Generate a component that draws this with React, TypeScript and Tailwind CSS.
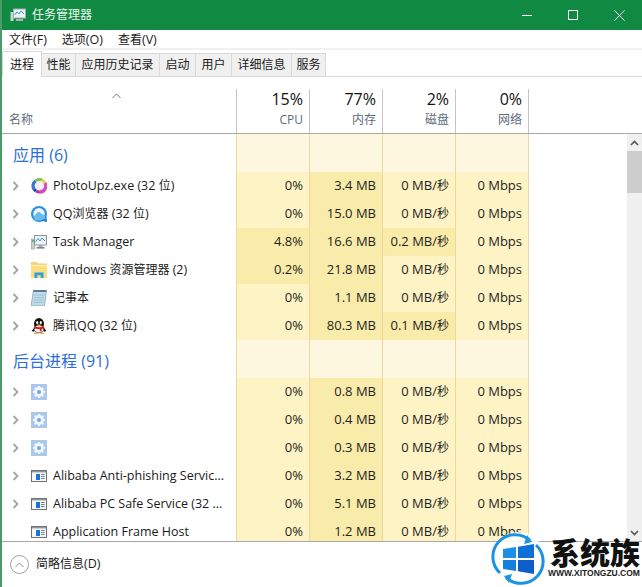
import React from 'react';

const FONT = '"Open Sans", "Noto Sans CJK SC", sans-serif';

const LIGHT = 'bg-[#fdf3c5]';
const DARK = 'bg-[#f9eba9]';

type Proc = { icon?: React.ReactNode; name: string; cpu: string; mem: string; disk: string; net: string; hot?: string; noArrow?: boolean };

// Chinese runs are a size smaller than the latin text around them
function Mixed({ text }: { text: string }) {
  return (
    <>
      {text.split(/([\u4e00-\u9fff]+)/).map((part, i) =>
        i % 2 === 1 ? <span key={i} className="text-[12px]">{part}</span> : <span key={i}>{part}</span>
      )}
    </>
  );
}

const Chevron = () => (
  <svg width="8" height="10" viewBox="0 0 8 10" fill="none" stroke="#a3a3a3" strokeWidth="1.8"><path d="M1.5 1l4 4-4 4" /></svg>
);

const PhotoIcon = () => (
  <svg width="16" height="16" viewBox="0 0 16 16">
    <circle cx="8.500" cy="8" r="5.800" fill="#f6f0f6" />
    <path d="M4.500 3A6 6 0 0 1 11 2" fill="none" stroke="#8cc152" strokeWidth="3" />
    <path d="M11 2a6 6 0 0 1 3 3" fill="none" stroke="#dcd64a" strokeWidth="3" />
    <path d="M14 5a6 6 0 0 1-5 9" fill="none" stroke="#cf4fbe" strokeWidth="3.400" />
    <path d="M9 14a6 6 0 0 1-4-1" fill="none" stroke="#b03fa8" strokeWidth="3" />
    <path d="M4.500 3A6 6 0 0 0 3 11" fill="none" stroke="#2f7ad0" strokeWidth="3.400" />
    <path d="M3 11a6 6 0 0 0 2 2" fill="none" stroke="#274a9e" strokeWidth="3" />
  </svg>
);

const QQBrowserIcon = () => (
  <svg width="16" height="16" viewBox="0 0 16 16">
    <circle cx="8" cy="8" r="8" fill="#2a8fdc" />
    <circle cx="8" cy="7.800" r="5.800" fill="#e9f5fd" />
    <path d="M2.400 10.500c2-.8 2.800-4.500 5.600-4.500 2 0 2.200 2.400 3.600 2.600 1 .1 1.800-.2 2.400-.6v4.500L9 14.500H4z" fill="#6bbcee" />
    <path d="M10.500 14.800c2-.4 4-1.800 5-4.300l.5 5.500z" fill="#1e7cc9" />
  </svg>
);

const TaskIcon = () => (
  <svg width="16" height="16" viewBox="0 0 16 16">
    <rect x="0.500" y="5" width="3" height="10" fill="#c9cfc9" stroke="#8c9a8c" strokeWidth="0.600" />
    <rect x="1.200" y="6" width="1.600" height="2" fill="#46b04a" />
    <rect x="3.500" y="1.500" width="12" height="9.500" fill="#eef4f8" stroke="#8f989e" />
    <path d="M4.500 8l2.500-3.500 2 2.500 2-3 3 3" fill="none" stroke="#3f97d6" strokeWidth="1" />
    <rect x="7.500" y="11" width="4" height="2" fill="#a5abb0" />
    <rect x="5.500" y="13" width="8" height="1.600" fill="#7f868b" />
  </svg>
);

const FolderIcon = () => (
  <svg width="16" height="16" viewBox="0 0 16 16">
    <path d="M0 0h6l1.500 1.500H16v2H0z" fill="#f5d36e" />
    <rect x="0" y="3" width="16" height="13" fill="#fbdd82" />
    <path d="M0 3.500h16" stroke="#fff2c4" strokeWidth="1" />
    <path d="M3.500 16v-5.500h9V16h-2.800v-2.800H6.300V16z" fill="#2aa0e0" />
  </svg>
);

const NotepadIcon = () => (
  <svg width="16" height="16" viewBox="0 0 16 16">
    <path d="M2.500 0h13l-2 16H0z" fill="#bfdcec" stroke="#7f9aa8" strokeWidth="0.700" />
    <path d="M2.500 0h13l-.3 2H2.300z" fill="#5f7a88" />
    <path d="M3.200 5h10M2.900 7.500h10M2.500 10h10M2.100 12.500h10" stroke="#8fb7cc" strokeWidth="0.700" />
  </svg>
);

const PenguinIcon = () => (
  <svg width="16" height="16" viewBox="0 0 16 16">
    <ellipse cx="8" cy="5.800" rx="5" ry="5.800" fill="#111" />
    <ellipse cx="8" cy="11" rx="5" ry="3.800" fill="#f4f4f4" stroke="#111" strokeWidth="0.600" />
    <ellipse cx="6.200" cy="4.400" rx="1.100" ry="1.500" fill="#fff" />
    <ellipse cx="9.800" cy="4.400" rx="1.100" ry="1.500" fill="#fff" />
    <path d="M5.400 6.600h5.200L8 8.400z" fill="#f4b120" />
    <path d="M3 8.200c3.200 1.500 6.800 1.500 10 0l.3 2c-.9.500-1.800.7-2.700.9l.2 2.200H9L8.600 11H6.600c-1.300-.1-2.600-.4-3.700-1z" fill="#e0141a" />
    <path d="M3.500 9.500L.5 13l2.700.7zM12.500 9.500l3 3.500-2.700.7z" fill="#111" />
    <path d="M2.500 16c1-1.800 3.600-1.800 4.500 0zM9 16c1-1.800 3.600-1.800 4.500 0z" fill="#f4a51c" />
  </svg>
);

const GearIcon = () => (
  <svg width="16" height="16" viewBox="0 0 16 16">
    <rect width="16" height="16" fill="#a9c8ec" />
    <circle cx="8" cy="8" r="3.600" fill="none" stroke="#f2f7fd" strokeWidth="2.600" />
    <path d="M8 2v2.400M8 11.600V14M2 8h2.400M11.600 8H14M3.800 3.800l1.700 1.700M10.500 10.500l1.700 1.700M12.200 3.800l-1.700 1.700M5.500 10.500l-1.700 1.700" stroke="#f2f7fd" strokeWidth="2" />
    <circle cx="8" cy="8" r="1.600" fill="#6fa3dc" />
  </svg>
);

const ServiceIcon = () => (
  <svg width="16" height="16" viewBox="0 0 16 16">
    <rect x="0.500" y="2.500" width="15" height="11" fill="#f7f7f7" stroke="#6d7378" />
    <path d="M1 3h14v1.400H1z" fill="#8f959a" />
    <rect x="5" y="6" width="4" height="6" fill="#1a73d9" />
    <path d="M10 6.500h3.600M10 8.500h3.600M10 10.500h3.600" stroke="#6d7378" strokeWidth="0.900" />
  </svg>
);

const apps: Proc[] = [
  { icon: <PhotoIcon />, name: 'PhotoUpz.exe (32 位)', cpu: '0%', mem: '3.4 MB', disk: '0 MB/秒', net: '0 Mbps' },
  { icon: <QQBrowserIcon />, name: 'QQ浏览器 (32 位)', cpu: '0%', mem: '15.0 MB', disk: '0 MB/秒', net: '0 Mbps' },
  { icon: <TaskIcon />, name: 'Task Manager', cpu: '4.8%', mem: '16.6 MB', disk: '0.2 MB/秒', net: '0 Mbps', hot: 'cd' },
  { icon: <FolderIcon />, name: 'Windows 资源管理器 (2)', cpu: '0.2%', mem: '21.8 MB', disk: '0 MB/秒', net: '0 Mbps', hot: 'c' },
  { icon: <NotepadIcon />, name: '记事本', cpu: '0%', mem: '1.1 MB', disk: '0 MB/秒', net: '0 Mbps' },
  { icon: <PenguinIcon />, name: '腾讯QQ (32 位)', cpu: '0%', mem: '80.3 MB', disk: '0.1 MB/秒', net: '0 Mbps', hot: 'd' },
];

const background: Proc[] = [
  { icon: <GearIcon />, name: '', cpu: '0%', mem: '0.8 MB', disk: '0 MB/秒', net: '0 Mbps' },
  { icon: <GearIcon />, name: '', cpu: '0%', mem: '0.4 MB', disk: '0 MB/秒', net: '0 Mbps' },
  { icon: <GearIcon />, name: '', cpu: '0%', mem: '0.3 MB', disk: '0 MB/秒', net: '0 Mbps' },
  { icon: <ServiceIcon />, name: 'Alibaba Anti-phishing Servic...', cpu: '0%', mem: '3.2 MB', disk: '0 MB/秒', net: '0 Mbps' },
  { icon: <ServiceIcon />, name: 'Alibaba PC Safe Service (32 ...', cpu: '0%', mem: '5.1 MB', disk: '0 MB/秒', net: '0 Mbps' },
  { icon: <ServiceIcon />, name: 'Application Frame Host', cpu: '0%', mem: '1.2 MB', disk: '0 MB/秒', net: '0 Mbps', noArrow: true },
];

function Cell({ children, tone }: { children?: React.ReactNode; tone: string }) {
  return (
    <div className={`w-[73px] h-full shrink-0 border-r border-[#ecd9a0] pr-[6px] flex items-center justify-end text-[13px] text-[#1f1f1f] whitespace-pre ${tone}`}>
      {children}
    </div>
  );
}

function Row({ p }: { p: Proc }) {
  return (
    <div className="flex h-7">
      <div className="w-[234px] shrink-0 flex items-center text-[12.500px] text-[#1a1a1a] whitespace-pre">
        <div className="w-[29px] pl-[10px] flex items-center">{!p.noArrow && <Chevron />}</div>
        <div className="w-[22px] flex items-center">{p.icon}</div>
        <span><Mixed text={p.name} /></span>
      </div>
      <div className="w-px shrink-0 bg-[#ecd9a0]" />
      <Cell tone={p.hot?.includes('c') ? DARK : LIGHT}>{p.cpu}</Cell>
      <Cell tone={DARK}>{p.mem}</Cell>
      <Cell tone={p.hot?.includes('d') ? DARK : LIGHT}><Mixed text={p.disk} /></Cell>
      <Cell tone={LIGHT}>{p.net}</Cell>
    </div>
  );
}

function Group({ title }: { title: string }) {
  const tone = 'bg-[#fef7e0]';
  return (
    <div className="flex h-[38px]">
      <div className="w-[234px] shrink-0 pl-[11px] pt-[10px] text-[16px] leading-[22px] text-[#2c6fd6]">{title}</div>
      <div className="w-px shrink-0 bg-[#ecd9a0]" />
      <Cell tone={tone} />
      <Cell tone={tone} />
      <Cell tone={tone} />
      <Cell tone={tone} />
    </div>
  );
}

function HeadCol({ pct, label }: { pct: string; label: string }) {
  return (
    <div className="w-[73px] h-[44px] shrink-0 border-r border-[#c4c4c4] pr-[6px] flex flex-col items-end">
      <div className="text-[16px] leading-[20px] text-[#111]">{pct}</div>
      <div className="text-[12px] leading-[16px] mt-[3px] text-[#5f6b7c]">{label}</div>
    </div>
  );
}

const tabs = [
  { label: '性能', w: 'w-[34px]' },
  { label: '应用历史记录', w: 'w-[84px]' },
  { label: '启动', w: 'w-[36px]' },
  { label: '用户', w: 'w-[36px]' },
  { label: '详细信息', w: 'w-[60px]' },
  { label: '服务', w: 'w-[34px]' },
];

function Watermark() {
  return (
    <div className="absolute left-[491px] top-[532px] w-[151px] h-[55px]">
      <svg width="54" height="54" viewBox="0 0 54 54" className="absolute left-0 top-0">
        <circle cx="27" cy="27" r="27" fill="#ffffff" opacity="0.850" />
        <path d="M9 41A22 22 0 0 1 39 8.500" fill="none" stroke="#1c93e2" strokeWidth="3" />
        <path d="M45 13A22 22 0 0 1 15 45.500" fill="none" stroke="#1c93e2" strokeWidth="3" />
        <path d="M36 3l5 7-8 2z" fill="#1c93e2" />
        <path d="M18 51l-5-7 8-2z" fill="#1c93e2" />
        <path d="M12 17l13-2v11H12z" fill="#1d8fe6" />
        <path d="M27 14.700l16-2.700v14H27z" fill="#0f6fd8" />
        <path d="M12 28h13v11l-13-2z" fill="#1380de" />
        <path d="M27 28h16v14l-16-2.700z" fill="#0a5fc8" />
      </svg>
      <div className="absolute left-[59px] top-[3px] text-[30px] leading-[32px] font-black text-[#111] whitespace-nowrap [font-family:'Noto_Sans_CJK_SC',sans-serif]">系统族</div>
      <div className="absolute left-[57px] top-[35px] text-[8.500px] leading-[12px] font-bold text-[#222] whitespace-nowrap [font-family:'Liberation_Sans',sans-serif]">WWW.XITONGZU.COM</div>
    </div>
  );
}

export default function App() {
  return (
    <div className="relative w-[642px] h-[587px] overflow-hidden bg-white flex" style={{ fontFamily: FONT }}>
      <div className="w-[2px] shrink-0 bg-[#4a9a6a]" />
      <div className="flex-1 min-w-0 flex flex-col">
        {/* title bar */}
        <div className="h-[30px] shrink-0 bg-[#108a42] flex items-center text-white">
          <div className="pl-[8px] w-[30px]">
            <svg width="16" height="16" viewBox="0 0 16 16">
              <rect x="0.500" y="5" width="3" height="9" fill="#c5d5cb" />
              <rect x="3.500" y="2" width="12" height="9" fill="#e8f2f6" stroke="#9fb0b0" />
              <path d="M4.500 8l2.500-3 2 2 2-3 3 3" fill="none" stroke="#3f97d6" strokeWidth="1" />
              <rect x="6" y="12" width="7" height="2" fill="#a8b8b0" />
            </svg>
          </div>
          <span className="text-[12px] text-[#eaf5ee]">任务管理器</span>
          <div className="ml-auto flex items-center">
            <div className="w-[46px] flex justify-center"><div className="w-[10px] h-px bg-white" /></div>
            <div className="w-[46px] flex justify-center"><div className="w-[10px] h-[10px] border border-white" /></div>
            <div className="w-[46px] flex justify-center">
              <svg width="11" height="11" viewBox="0 0 11 11" stroke="#fff" strokeWidth="1"><path d="M0.500 0.500l10 10M10.500 0.500l-10 10" /></svg>
            </div>
          </div>
        </div>
        {/* menu */}
        <div className="h-[18px] shrink-0 flex items-center text-[12.500px] text-[#1a1a1a] pl-[7px] gap-[15px] pt-[2px]">
          <span><Mixed text="文件(F)" /></span><span><Mixed text="选项(O)" /></span><span><Mixed text="查看(V)" /></span>
        </div>
        <div className="h-[2px] shrink-0 bg-[#f1f1f1]" />
        {/* tabs */}
        <div className="h-[27px] shrink-0 flex items-end border-b border-[#d9d9d9] text-[12px] text-[#1a1a1a]">
          <div className="h-[26px] w-[40px] border border-[#d9d9d9] border-b-0 bg-white flex items-center justify-center relative top-px">进程</div>
          {tabs.map((t) => (
            <div key={t.label} className={`h-[23px] ${t.w} bg-[#f0f0f0] border-r border-t border-[#d9d9d9] flex items-center justify-center`}>{t.label}</div>
          ))}
        </div>
        {/* column heads */}
        <div className="h-[57px] shrink-0 flex items-end border-b border-[#a8a8a8]">
          <div className="w-[234px] h-[44px] shrink-0 relative">
            <svg width="9" height="6" viewBox="0 0 9 6" fill="none" stroke="#777" className="absolute left-[110px] top-[4px]"><path d="M0.500 5l4-4 4 4" /></svg>
            <span className="absolute left-[7px] top-[23px] text-[12px] leading-[16px] text-[#5f6b7c]">名称</span>
          </div>
          <div className="w-px h-[44px] shrink-0 bg-[#c4c4c4]" />
          <HeadCol pct="15%" label="CPU" />
          <HeadCol pct="77%" label="内存" />
          <HeadCol pct="2%" label="磁盘" />
          <HeadCol pct="0%" label="网络" />
        </div>
        {/* table body */}
        <div className="h-[407px] shrink-0 flex overflow-hidden">
          <div className="w-[625px] shrink-0">
            <Group title="应用 (6)" />
            {apps.map((p) => <Row key={p.name} p={p} />)}
            <Group title="后台进程 (91)" />
            {background.map((p, i) => <Row key={i} p={p} />)}
          </div>
          <div className="w-[15px] shrink-0 bg-[#f0f0f0] flex flex-col">
            <div className="h-[17px] flex items-center justify-center">
              <svg width="9" height="6" viewBox="0 0 9 6" fill="none" stroke="#555" strokeWidth="1.600"><path d="M1 5l3.500-3.500L8 5" /></svg>
            </div>
            <div className="h-[42px] bg-[#cdcdcd]" />
            <div className="flex-1" />
            <div className="h-[17px] flex items-center justify-center">
              <svg width="9" height="6" viewBox="0 0 9 6" fill="none" stroke="#555" strokeWidth="1.600"><path d="M1 1l3.500 3.500L8 1" /></svg>
            </div>
          </div>
        </div>
        {/* footer */}
        <div className="flex-1 border-t border-[#a8a8a8] flex items-center pl-[8px]">
          <div className="w-[19px] h-[19px] rounded-full border border-[#a0a0a0] flex items-center justify-center">
            <svg width="9" height="6" viewBox="0 0 9 6" fill="none" stroke="#8a8a8a"><path d="M0.500 5l4-4 4 4" /></svg>
          </div>
          <span className="ml-[7px] text-[12.500px] text-[#1a1a1a]"><Mixed text="简略信息(D)" /></span>
        </div>
      </div>
      <Watermark />
    </div>
  );
}
